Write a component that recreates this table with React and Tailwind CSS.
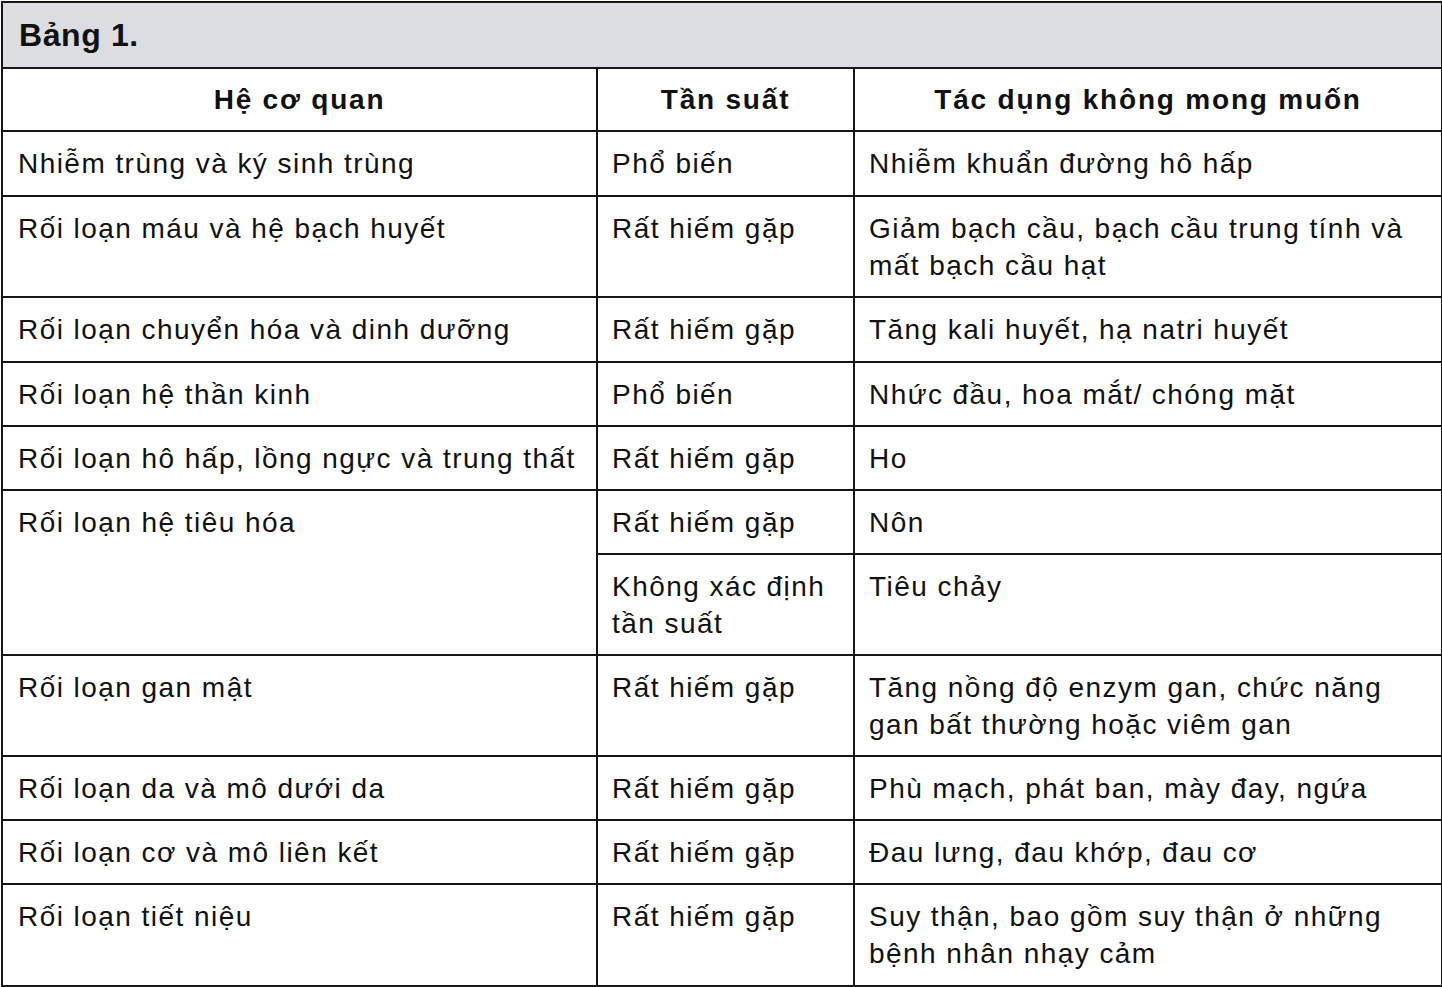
const rows = [
  { sys: 'Nhiễm trùng và ký sinh trùng', freq: 'Phổ biến', effect: 'Nhiễm khuẩn đường hô hấp', tall: true },
  { sys: 'Rối loạn máu và hệ bạch huyết', freq: 'Rất hiếm gặp', effect: 'Giảm bạch cầu, bạch cầu trung tính và mất bạch cầu hạt' },
  { sys: 'Rối loạn chuyển hóa và dinh dưỡng', freq: 'Rất hiếm gặp', effect: 'Tăng kali huyết, hạ natri huyết', tall: true },
  { sys: 'Rối loạn hệ thần kinh', freq: 'Phổ biến', effect: 'Nhức đầu, hoa mắt/ chóng mặt' },
  { sys: 'Rối loạn hô hấp, lồng ngực và trung thất', freq: 'Rất hiếm gặp', effect: 'Ho' },
];

const rowsAfter = [
  { sys: 'Rối loạn gan mật', freq: 'Rất hiếm gặp', effect: 'Tăng nồng độ enzym gan, chức năng gan bất thường hoặc viêm gan' },
  { sys: 'Rối loạn da và mô dưới da', freq: 'Rất hiếm gặp', effect: 'Phù mạch, phát ban, mày đay, ngứa' },
  { sys: 'Rối loạn cơ và mô liên kết', freq: 'Rất hiếm gặp', effect: 'Đau lưng, đau khớp, đau cơ' },
  { sys: 'Rối loạn tiết niệu', freq: 'Rất hiếm gặp', effect: 'Suy thận, bao gồm suy thận ở những bệnh nhân nhạy cảm', tall: true },
];

const cell = 'border-2 border-[#161616] align-top pl-[14px] pr-[12px] py-[12.5px]';
const cellTall = 'border-2 border-[#161616] align-top pl-[14px] pr-[12px] py-[13px]';
const head = 'border-2 border-[#161616] font-bold text-center py-0 align-middle tracking-[1.8px]';

const Row = ({ r }) => {
  const c = r.tall ? cellTall : cell;
  return (
    <tr>
      <td className={c + ' pl-[15px]'}>{r.sys}</td>
      <td className={c}>{r.freq}</td>
      <td className={c}>{r.effect}</td>
    </tr>
  );
};

export default function App() {
  return (
    <div className="bg-white w-[1442px] h-[987px] overflow-hidden">
      <table
        className="ml-px mt-px w-[1440px] table-fixed border-collapse border-2 border-[#161616] text-[28px] leading-[37px] tracking-[1.45px] text-[#111]"
        style={{ fontFamily: '"Liberation Sans", Arial, sans-serif' }}
      >
        <colgroup>
          <col className="w-[595px]" />
          <col className="w-[257px]" />
          <col className="w-[588px]" />
        </colgroup>
        <tbody>
          <tr>
            <td colSpan={3} className="border-2 border-[#161616] bg-[#dcdde0] pl-[16px] h-[66px] py-0 text-[32px] tracking-[0.6px] font-bold align-middle">
              Bảng 1.
            </td>
          </tr>
          <tr>
            <th className={head + ' h-[63px]'}>Hệ cơ quan</th>
            <th className={head}>Tần suất</th>
            <th className={head}>Tác dụng không mong muốn</th>
          </tr>
          {rows.map((r, i) => (
            <Row key={i} r={r} />
          ))}
          <tr>
            <td rowSpan={2} className={cell + ' pl-[15px]'}>Rối loạn hệ tiêu hóa</td>
            <td className={cell}>Rất hiếm gặp</td>
            <td className={cell}>Nôn</td>
          </tr>
          <tr>
            <td className={cell}>Không xác định tần suất</td>
            <td className={cell}>Tiêu chảy</td>
          </tr>
          {rowsAfter.map((r, i) => (
            <Row key={i} r={r} />
          ))}
        </tbody>
      </table>
    </div>
  );
}
